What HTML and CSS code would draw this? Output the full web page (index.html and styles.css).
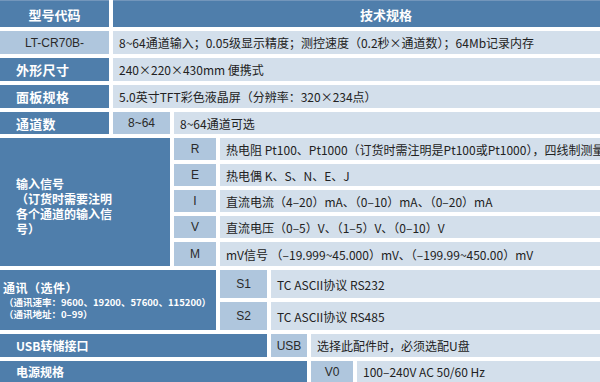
FILE: index.html
```
<!DOCTYPE html>
<html lang="zh">
<head>
<meta charset="utf-8">
<link rel="stylesheet" href="styles.css">
</head>
<body>
<div class="spec">
  <div class="cell dark head center">型号代码</div>
  <div class="cell dark head center span6">技术规格</div>

  <div class="cell mid code">LT-CR70B-</div>
  <div class="cell light txt span6">8~64通道输入；0.05级显示精度；测控速度（0.2秒×通道数）；64Mb记录内存</div>

  <div class="cell dark label">外形尺寸</div>
  <div class="cell light txt span6">240×220×430mm 便携式</div>

  <div class="cell dark label">面板规格</div>
  <div class="cell light txt span6">5.0英寸TFT彩色液晶屏（分辨率：320×234点）</div>

  <div class="cell dark label">通道数</div>
  <div class="cell mid code">8~64</div>
  <div class="cell light txt span5">8~64通道可选</div>

  <div class="cell dark block-input">
    <div class="in-line">输入信号</div>
    <div class="in-line">（订货时需要注明</div>
    <div class="in-line">各个通道的输入信</div>
    <div class="in-line">号）</div>
  </div>
  <div class="cell mid code">R</div>
  <div class="cell light txt span4">热电阻 Pt100、Pt1000（订货时需注明是Pt100或Pt1000），四线制测量</div>
  <div class="cell mid code">E</div>
  <div class="cell light txt span4">热电偶 K、S、N、E、J</div>
  <div class="cell mid code">I</div>
  <div class="cell light txt span4">直流电流（4–20）mA、（0–10）mA、（0–20）mA</div>
  <div class="cell mid code">V</div>
  <div class="cell light txt span4">直流电压（0–5）V、（1–5）V、（0–10）V</div>
  <div class="cell mid code">M</div>
  <div class="cell light txt span4">mV信号 （–19.999~45.000）mV、（–199.99~450.00）mV</div>

  <div class="cell dark block-comm">
    <div class="comm-title">通讯（选件）</div>
    <div class="comm-sub">（通讯速率：9600、19200、57600、115200）</div>
    <div class="comm-sub">（通讯地址：0–99）</div>
  </div>
  <div class="cell mid code">S1</div>
  <div class="cell light txt span3">TC ASCII协议 RS232</div>
  <div class="cell mid code">S2</div>
  <div class="cell light txt span3">TC ASCII协议 RS485</div>

  <div class="cell dark label small span4">USB转储接口</div>
  <div class="cell mid code">USB</div>
  <div class="cell light txt span2">选择此配件时，必须选配U盘</div>

  <div class="cell dark label small span5">电源规格</div>
  <div class="cell mid code">V0</div>
  <div class="cell light txt">100–240V AC 50/60 Hz</div>
</div>
</body>
</html>
```

FILE: styles.css
```
html, body {
  margin: 0;
  padding: 0;
  overflow: hidden;
  background: #ffffff;
}

.spec {
  width: 659px;
  display: grid;
  grid-template-columns: 109px 57px 42px 47px 36px 42px 302px;
  grid-template-rows: 27px 23px 23px 23px 22px 22px 22px 22px 22px 24px 28px 28px 23px 21px;
  gap: 4px;
  font-family: "Noto Sans CJK SC", "Liberation Sans", sans-serif;
  font-size: 12px;
  color: #222;
}

.cell {
  display: flex;
  align-items: center;
  min-width: 0;
  white-space: nowrap;
  overflow: hidden;
}

.dark { background: #4f7eab; color: #fff; }
.mid { background: #afc6dd; }
.light { background: #d3dfeb; }

.head {
  font-weight: bold;
  font-size: 13px;
  border-top: 1px solid #7396bb;
}
.center { justify-content: center; }

.label {
  font-weight: bold;
  font-size: 13px;
  padding-left: 16px;
  letter-spacing: 0.3px;
}
.label.small {
  font-size: 12px;
  letter-spacing: 0;
}

.code {
  justify-content: center;
  font-family: "Liberation Sans", "Noto Sans CJK SC", sans-serif;
  font-size: 12px;
  color: #2a2a2a;
}

.txt {
  padding-left: 6px;
}

.span2 { grid-column: span 2; }
.span3 { grid-column: span 3; }
.span4 { grid-column: span 4; }
.span5 { grid-column: span 5; }
.span6 { grid-column: span 6; }

.block-input {
  grid-column: span 2;
  grid-row: span 5;
  flex-direction: column;
  align-items: flex-start;
  justify-content: center;
  padding: 8px 0 0 16px;
  box-sizing: border-box;
  font-weight: bold;
}
.in-line {
  height: 15px;
  line-height: 15px;
  font-size: 12px;
}

.block-comm {
  grid-column: span 3;
  grid-row: span 2;
  flex-direction: column;
  align-items: flex-start;
  justify-content: center;
  padding-left: 3px;
  font-weight: bold;
}
.comm-title {
  font-size: 12px;
  line-height: 16px;
  letter-spacing: 0.5px;
}
.comm-sub {
  font-size: 9.5px;
  line-height: 12px;
  padding-left: 1px;
}
```
